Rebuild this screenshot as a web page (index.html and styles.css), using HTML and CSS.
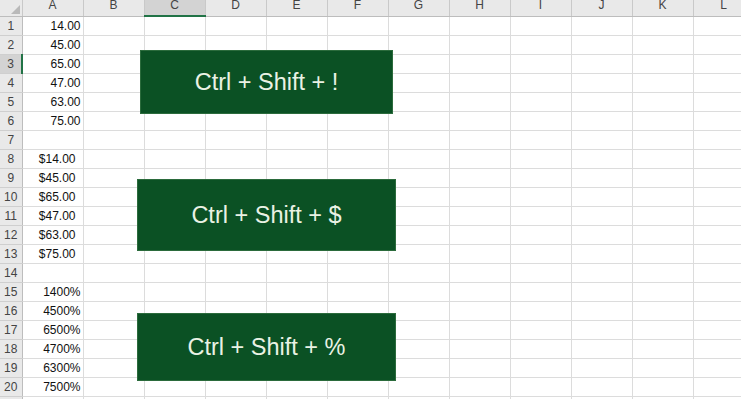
FILE: index.html
```html
<!DOCTYPE html>
<html lang="en">

<head>
    <meta charset="UTF-8">
    <title>Number format shortcuts</title>
    <link rel="stylesheet" href="styles.css">
</head>

<body>
    <div class="sheet">
        <table class="grid">
            <colgroup>
                <col class="col-head">
                <col span="12" class="col-cell">
            </colgroup>
            <thead>
                <tr>
                    <th class="corner"><span class="tri"></span></th>
                    <th>A</th><th>B</th><th class="active">C</th><th>D</th><th>E</th><th>F</th>
                    <th>G</th><th>H</th><th>I</th><th>J</th><th>K</th><th>L</th>
                </tr>
            </thead>
            <tbody id="rows"></tbody>
        </table>

        <div class="shortcut first">Ctrl + Shift + !</div>
        <div class="shortcut second">Ctrl + Shift + $</div>
        <div class="shortcut third">Ctrl + Shift + %</div>
    </div>

    <script>
        const values = [
            "14.00", "45.00", "65.00", "47.00", "63.00", "75.00", "",
            "$14.00", "$45.00", "$65.00", "$47.00", "$63.00", "$75.00", "",
            "1400%", "4500%", "6500%", "4700%", "6300%", "7500%", ""
        ];

        function buildRows() {
            const body = document.getElementById("rows");
            values.forEach((val, i) => {
                const tr = document.createElement("tr");
                const head = document.createElement("td");
                head.className = "row-head" + (i === 2 ? " active" : "");
                head.textContent = i + 1;
                tr.appendChild(head);
                for (let c = 0; c < 12; c++) {
                    const td = document.createElement("td");
                    if (c === 0 && val) {
                        td.textContent = val;
                        td.className = val.startsWith("$") ? "num money" : "num";
                    }
                    tr.appendChild(td);
                }
                body.appendChild(tr);
            });
        }

        buildRows();
    </script>
</body>

</html>
```

FILE: styles.css
```css
* {
    margin: 0;
    padding: 0;
    box-sizing: border-box;
}

body {
    width: 741px;
    height: 399px;
    overflow: hidden;
    background: #fff;
    font-family: "Liberation Sans", Arial, sans-serif;
}

.sheet {
    position: relative;
    margin-top: -6px;
}

.grid {
    border-collapse: collapse;
    table-layout: fixed;
    width: 754px;
    font-size: 12px;
    color: #222;
}

.col-head {
    width: 22px;
}

.col-cell {
    width: 61px;
}

th {
    height: 22px;
    background: #e9e9e9;
    color: #444;
    font-weight: normal;
    font-size: 12px;
    border-right: 1px solid #c9c9c9;
    border-bottom: 1px solid #bdbdbd;
    text-align: center;
    vertical-align: middle;
}

th.active {
    background: #d3d3d3;
    border-bottom: 2px solid #217346;
}

.corner {
    position: relative;
}

.tri {
    position: absolute;
    right: 2px;
    bottom: 2px;
    width: 0;
    height: 0;
    border-left: 9px solid transparent;
    border-bottom: 9px solid #b9b9b9;
}

tr {
    height: 19px;
}

td {
    border-right: 1px solid #dcdcdc;
    border-bottom: 1px solid #dcdcdc;
    white-space: nowrap;
    overflow: hidden;
}

.row-head {
    background: #e9e9e9;
    color: #444;
    text-align: center;
    border-right: 1px solid #bdbdbd;
    border-bottom: 1px solid #cfcfcf;
}

.row-head.active {
    background: #d3d3d3;
    border-right: 2px solid #217346;
}

.num {
    text-align: right;
    padding-right: 2px;
    color: #111;
}

.money {
    padding-right: 7px;
}

.shortcut {
    position: absolute;
    display: flex;
    justify-content: center;
    align-items: center;
    background: #0b5124;
    border: 1px solid #2b6b3c;
    color: #eaf2e4;
    font-size: 23.5px;
}

.first {
    left: 140px;
    top: 56px;
    width: 253px;
    height: 64px;
}

.second {
    left: 137px;
    top: 185px;
    width: 259px;
    height: 72px;
}

.third {
    left: 137px;
    top: 319px;
    width: 259px;
    height: 68px;
}
```
